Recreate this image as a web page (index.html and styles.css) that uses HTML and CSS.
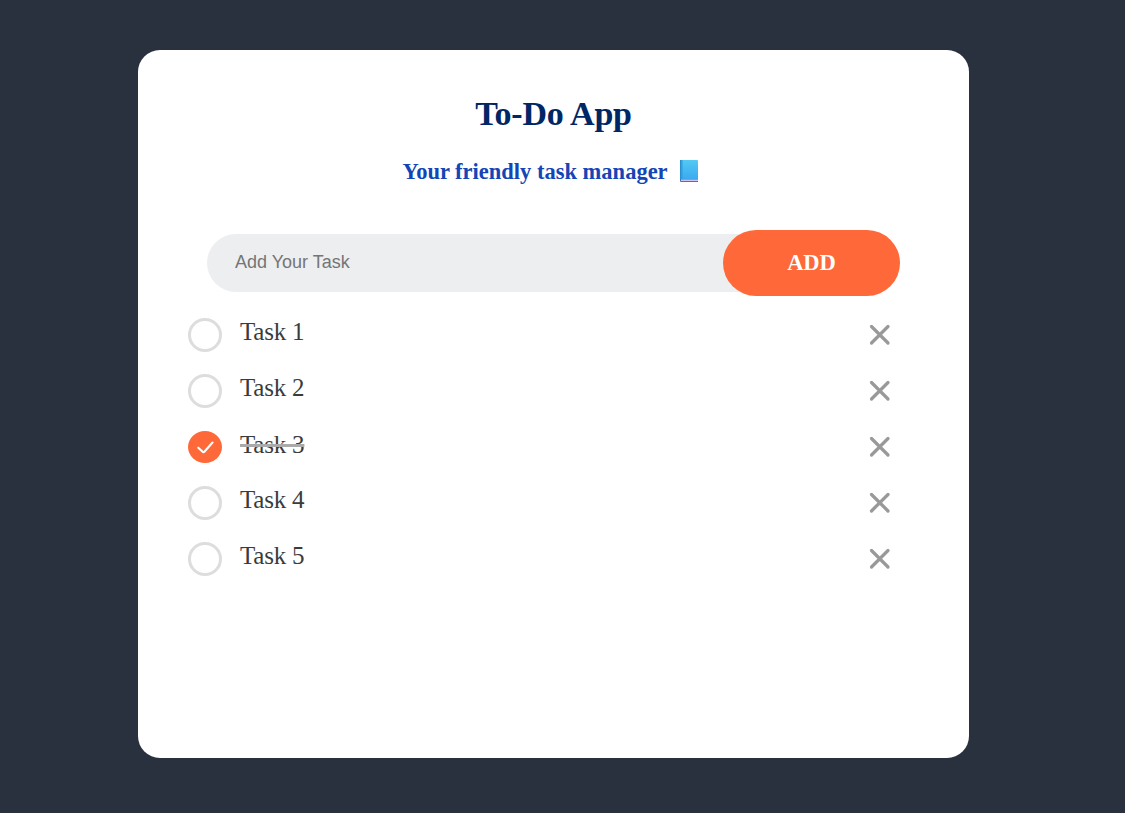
FILE: index.html
```html
<!DOCTYPE html>
<html lang="en">
<head>
<meta charset="utf-8">
<title>To-Do App</title>
<link rel="stylesheet" href="styles.css">
</head>
<body>
<main class="card">
  <h1 class="title">To-Do App</h1>
  <h2 class="subtitle"><span>Your friendly task manager</span>
    <svg class="book" viewBox="0 0 20 24">
      <defs><linearGradient id="cover" x1="0" y1="0" x2="0" y2="1"><stop offset="0" stop-color="#53c9f3"/><stop offset="1" stop-color="#3baaf0"/></linearGradient></defs>
      <path fill="url(#cover)" d="M1 1h17q1 0 1 1v18H1z"/>
      <path fill="#2b8fce" d="M1 1h1.500v19H1z"/>
      <path fill="#2f9edb" d="M2.500 1h1v19h-1z"/>
      <path fill="#4b6fc0" d="M1 20h18v3H2q-1 0-1-1z"/>
      <path fill="#d3c4ee" d="M2 20.500h17v1.500H2z"/>
    </svg>
  </h2>
  <form class="row">
    <input class="field" type="text" placeholder="Add Your Task">
    <button class="add" type="button">ADD</button>
  </form>
  <ul class="list">
    <li class="task"><span class="mark"></span><span class="label">Task 1</span><svg class="close" viewBox="0 0 22 22"><path d="M2.500 2.500l16.500 16.500M19 2.500l-16.500 16.500"/></svg></li>
    <li class="task"><span class="mark"></span><span class="label">Task 2</span><svg class="close" viewBox="0 0 22 22"><path d="M2.500 2.500l16.500 16.500M19 2.500l-16.500 16.500"/></svg></li>
    <li class="task done"><span class="mark"><svg class="check" viewBox="0 0 34 32"><path d="M10.300 16.700l4.600 4.300q.8.600 1.500-.3L24.500 11.500"/></svg></span><span class="label">Task 3</span><svg class="close" viewBox="0 0 22 22"><path d="M2.500 2.500l16.500 16.500M19 2.500l-16.500 16.500"/></svg></li>
    <li class="task"><span class="mark"></span><span class="label">Task 4</span><svg class="close" viewBox="0 0 22 22"><path d="M2.500 2.500l16.500 16.500M19 2.500l-16.500 16.500"/></svg></li>
    <li class="task"><span class="mark"></span><span class="label">Task 5</span><svg class="close" viewBox="0 0 22 22"><path d="M2.500 2.500l16.500 16.500M19 2.500l-16.500 16.500"/></svg></li>
  </ul>
</main>
</body>
</html>
```
FILE: styles.css
```css
* { box-sizing: border-box; margin: 0; padding: 0; }
body { background: #2a313e; font-family: "Liberation Serif", serif; height: 813px; overflow: hidden; }
.card { width: 831px; height: 708px; margin: 50px 0 0 138px; background: #fff; border-radius: 22px; padding: 44px 50px 0; }
.title { font-size: 34px; line-height: 40px; letter-spacing: -0.2px; text-align: center; color: #002765; }
.subtitle { display: flex; justify-content: center; align-items: center; gap: 11px; height: 26px; margin-top: 24px; padding-right: 6px; font-size: 22.5px; line-height: 26px; color: #1345b7; }
.subtitle span { padding-top: 1px; }
.book { width: 20px; height: 24px; }
.row { display: flex; align-items: center; width: 693px; height: 58px; margin: 50px 0 0 19px; background: #edeef0; border-radius: 29px; }
.field { flex: 1; min-width: 0; height: 56px; padding: 0 0 2px 28px; border: 0; background: transparent; font: 18px "Liberation Sans", sans-serif; }
.field::placeholder { color: #757575; }
.add { width: 177px; height: 66px; margin: -4px 0; border: 0; border-radius: 33px; background: #ff6838; color: #fff; font: bold 22.5px "Liberation Serif", serif; }
.list { list-style: none; margin-top: 15px; }
.task { display: flex; align-items: center; height: 56px; padding-right: 28px; }
.mark { width: 34px; height: 34px; border: 3.5px solid #ddd; border-radius: 50%; }
.label { margin: 0 auto 6px 18px; font-size: 25px; line-height: 30px; letter-spacing: -0.2px; color: #3b3b3b; }
.close { width: 22px; height: 22px; fill: none; stroke: #999; stroke-width: 3.2; stroke-linecap: round; }
.done .mark { height: 32px; border: 0; background: #ff6838; }
.done .label { margin-bottom: 4px; text-decoration: line-through 3px #aaa; }
.check { display: block; width: 34px; height: 32px; fill: none; stroke: #fff; stroke-width: 2.1; stroke-linecap: round; stroke-linejoin: round; }
```
